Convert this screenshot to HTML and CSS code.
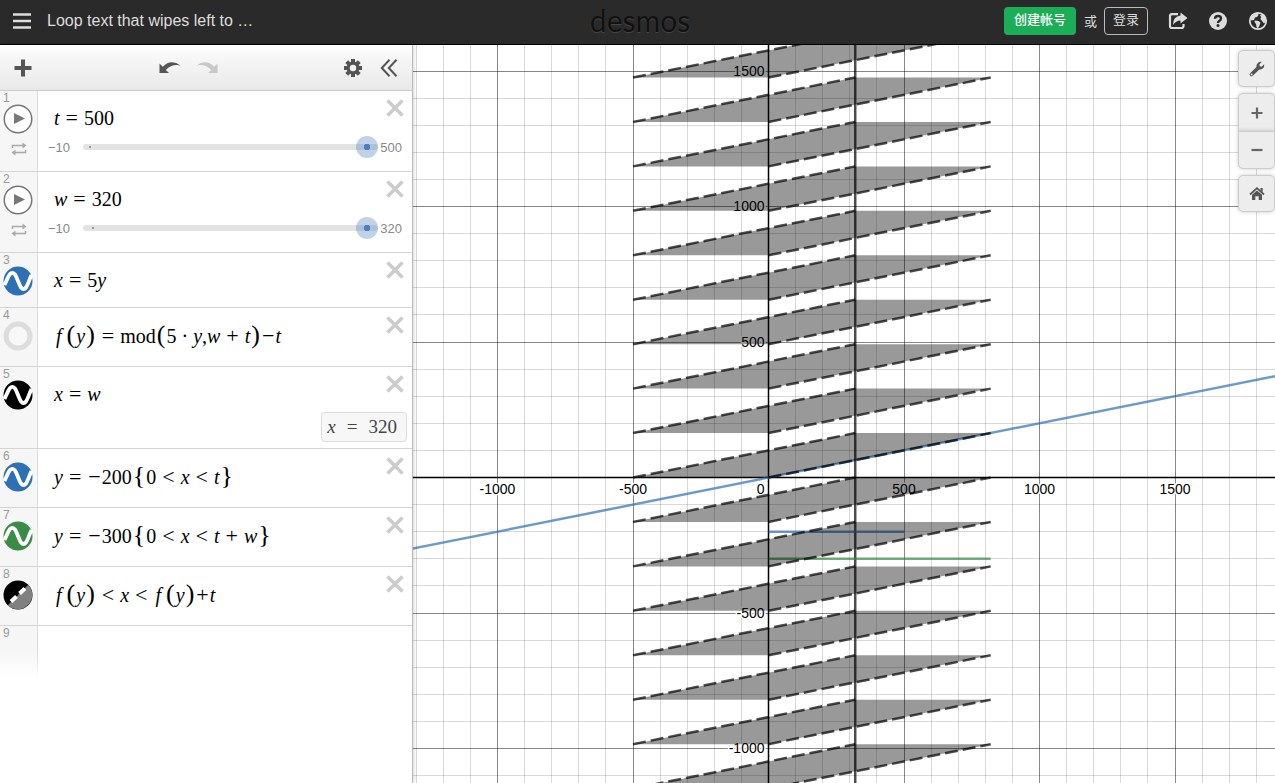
FILE: index.html
```html
<!DOCTYPE html>
<html lang="zh-CN">
<head>
<meta charset="utf-8">
<title>Loop text that wipes left to right</title>
<link rel="stylesheet" href="styles.css">
</head>
<body>
<svg class="sprite" aria-hidden="true">
  <symbol id="wave" viewBox="0 0 30 30">
    <circle cx="15" cy="15" r="14.5" fill="currentColor"/>
    <path d="M1.500 19C3.500 15 5 10.500 7 8Q9.500 5.500 12 8.500C14 11.500 16 18.500 18 21.500Q20.500 24.500 23 21.500C25 18.500 26.500 13 28.500 9" fill="none" stroke="#fff" stroke-width="3.800"/>
  </symbol>
  <symbol id="shade" viewBox="0 0 30 30">
    <circle cx="15" cy="15" r="14.500" fill="#000"/>
    <path d="M25.250 4.750A14.500 14.500 0 0 1 4.750 25.250Z" fill="#808080"/>
    <path d="M8 21.500L13.500 16.500M16.500 13.500L22 8.500" fill="none" stroke="#fff" stroke-width="4"/>
  </symbol>
  <symbol id="play" viewBox="0 0 30 30">
    <circle cx="15" cy="15" r="13.750" fill="#fff" stroke="#777" stroke-width="1.500"/>
    <path d="M11 9L22 14.500L11 20Z" fill="#777"/>
  </symbol>
  <symbol id="loop" viewBox="0 0 16 14">
    <path d="M1.500 6V3.500H13M14.500 8V10.500H3" fill="none" stroke="#aaa" stroke-width="1.500"/>
    <path d="M11.500 0.500L15.500 3.500L11.500 6.500ZM4.500 7.500L0.500 10.500L4.500 13.500Z" fill="#aaa"/>
  </symbol>
  <symbol id="cross" viewBox="0 0 18 18">
    <path d="M1.500 1.500L16.500 16.500M16.500 1.500L1.500 16.500" fill="none" stroke="#ccc" stroke-width="3.500"/>
  </symbol>
</svg>

<header class="topbar">
  <div class="topbar-left">
    <button class="icon-btn" aria-label="菜单">
      <svg width="20" height="18" viewBox="0 0 20 18"><path d="M1 2.500H19M1 9H19M1 15.500H19" stroke="#ddd" stroke-width="2.500"/></svg>
    </button>
    <h1 class="title">Loop text that wipes left to …</h1>
  </div>
  <div class="logo">desmos</div>
  <div class="topbar-right">
    <button class="signup">创建帐号</button>
    <span class="or">或</span>
    <button class="login">登录</button>
    <nav class="links">
      <button class="icon-btn" aria-label="分享">
        <svg width="20" height="18" viewBox="0 0 20 18"><path d="M10 2.200H4Q2 2.200 2 4.200V14Q2 16 4 16H13.500Q15.500 16 15.500 14V12" fill="none" stroke="#ddd" stroke-width="2.200"/><path d="M12.500 0.500L19.500 6L12.500 11.500V8.500Q8 8.500 5 13Q5 4.500 12.500 3.600Z" fill="#ddd"/></svg>
      </button>
      <button class="icon-btn" aria-label="帮助">
        <svg width="20" height="20" viewBox="0 0 20 20"><circle cx="10" cy="10" r="9" fill="#ddd"/><path d="M7 7.800Q7 5 10 5Q13 5 13 7.500Q13 9 11.200 10Q10 10.700 10 12" fill="none" stroke="#2a2a2a" stroke-width="2.400"/><circle cx="10" cy="14.600" r="1.500" fill="#2a2a2a"/></svg>
      </button>
      <button class="icon-btn" aria-label="语言">
        <svg width="20" height="20" viewBox="0 0 20 20"><circle cx="10" cy="10" r="8.200" fill="none" stroke="#ddd" stroke-width="1.800"/><path d="M2 7L4 3.500L7 2L10 1.500L10.500 4L9 6L7 6.500L6 9L3.500 9.500ZM7 9.500L10.500 10L12.500 11.500L11.500 14.500L10 17.500L8.500 16L8 13L6.500 11ZM12 4L15 3.500L17.500 6.500L18 10L16 12.500L14 10L12.500 8L13 6Z" fill="#ddd"/></svg>
      </button>
    </nav>
  </div>
</header>

<main class="workspace">
  <section class="panel">
    <div class="toolbar">
      <button class="icon-btn" aria-label="添加"><svg width="18" height="18" viewBox="0 0 18 18"><path d="M9 0.500V17.500M0.500 9H17.500" stroke="#555" stroke-width="4"/></svg></button>
      <div class="history">
        <button class="icon-btn" aria-label="撤消"><svg width="22" height="13" viewBox="0 0 22 13"><path d="M0.500 2.500V12H10L6.800 9Q13 2.500 21.500 4.500Q12-2.500 3.800 5.700Z" fill="#555"/></svg></button>
        <button class="icon-btn" aria-label="重做"><svg width="22" height="13" viewBox="0 0 22 13"><path d="M21.500 2.500V12H12L15.200 9Q9 2.500 0.500 4.500Q10-2.500 18.200 5.700Z" fill="#c8c8c8"/></svg></button>
      </div>
      <div class="tools">
        <button class="icon-btn" aria-label="编辑列表"><svg width="18" height="18" viewBox="0 0 18 18"><g stroke="#555" stroke-width="4"><path d="M9 0V18M0 9H18M2.700 2.700L15.300 15.300M15.300 2.700L2.700 15.300"/></g><circle cx="9" cy="9" r="6.500" fill="#555"/><circle cx="9" cy="9" r="3.200" fill="#f3f3f3"/></svg></button>
        <button class="icon-btn" aria-label="隐藏列表"><svg width="18" height="18" viewBox="0 0 18 18"><path d="M9.500 0.800L1.800 9L9.500 17.200M16.500 0.800L8.800 9L16.500 17.200" fill="none" stroke="#555" stroke-width="2"/></svg></button>
      </div>
    </div>

    <ol class="list">
      <li class="row row-slider">
        <div class="gutter"><span class="num">1</span>
          <button class="icon-btn" aria-label="播放 t"><svg class="badge"><use href="#play"/></svg></button>
          <button class="icon-btn loop" aria-label="循环 t"><svg width="16" height="14"><use href="#loop"/></svg></button></div>
        <div class="body">
          <div class="math"><i>t</i><b class="eq">=</b>500</div>
          <label class="slider"><span>−10</span><input type="range" class="range" min="-10" max="500" value="500" aria-label="t"><span>500</span></label>
        </div>
        <button class="icon-btn close" aria-label="删除"><svg width="18" height="18"><use href="#cross"/></svg></button>
      </li>
      <li class="row row-slider">
        <div class="gutter"><span class="num">2</span>
          <button class="icon-btn" aria-label="播放 w"><svg class="badge"><use href="#play"/></svg></button>
          <button class="icon-btn loop" aria-label="循环 w"><svg width="16" height="14"><use href="#loop"/></svg></button></div>
        <div class="body">
          <div class="math"><i>w</i><b class="eq">=</b>320</div>
          <label class="slider"><span>−10</span><input type="range" class="range range-w" min="-10" max="320" value="320" aria-label="w"><span>320</span></label>
        </div>
        <button class="icon-btn close" aria-label="删除"><svg width="18" height="18"><use href="#cross"/></svg></button>
      </li>
      <li class="row row-short">
        <div class="gutter"><span class="num">3</span><button class="icon-btn blue" aria-label="隐藏"><svg class="badge"><use href="#wave"/></svg></button></div>
        <div class="body"><div class="math"><i>x</i><b class="eq">=</b>5<i>y</i></div></div>
        <button class="icon-btn close" aria-label="删除"><svg width="18" height="18"><use href="#cross"/></svg></button>
      </li>
      <li class="row row-tall">
        <div class="gutter"><span class="num">4</span><button class="icon-btn" aria-label="显示"><svg class="badge" viewBox="0 0 30 30"><circle cx="15" cy="15" r="12" fill="#f8f8f8" stroke="#ddd" stroke-width="5"/></svg></button></div>
        <div class="body"><div class="math"><i class="fn">f</i><b class="par">(</b><i>y</i><b class="par">)</b><b class="eq">=</b>mod<b class="par">(</b>5<b class="dot">·</b><i>y</i>,<i>w</i><b class="op">+</b><i>t</i><b class="par">)</b><b class="sign">−</b><i>t</i></div></div>
        <button class="icon-btn close" aria-label="删除"><svg width="18" height="18"><use href="#cross"/></svg></button>
      </li>
      <li class="row row-result">
        <div class="gutter"><span class="num">5</span><button class="icon-btn black" aria-label="隐藏"><svg class="badge"><use href="#wave"/></svg></button></div>
        <div class="body"><div class="math"><i>x</i><b class="eq">=</b><i>w</i></div><output class="result"><i>x</i><b class="sign">=</b>320</output></div>
        <button class="icon-btn close" aria-label="删除"><svg width="18" height="18"><use href="#cross"/></svg></button>
      </li>
      <li class="row row-tall">
        <div class="gutter"><span class="num">6</span><button class="icon-btn blue" aria-label="隐藏"><svg class="badge"><use href="#wave"/></svg></button></div>
        <div class="body"><div class="math"><i>y</i><b class="eq">=</b><b class="sign">−</b>200<b class="par">{</b>0<b class="op">&lt;</b><i>x</i><b class="op">&lt;</b><i>t</i><b class="par">}</b></div></div>
        <button class="icon-btn close" aria-label="删除"><svg width="18" height="18"><use href="#cross"/></svg></button>
      </li>
      <li class="row row-tall">
        <div class="gutter"><span class="num">7</span><button class="icon-btn green" aria-label="隐藏"><svg class="badge"><use href="#wave"/></svg></button></div>
        <div class="body"><div class="math"><i>y</i><b class="eq">=</b><b class="sign">−</b>300<b class="par">{</b>0<b class="op">&lt;</b><i>x</i><b class="op">&lt;</b><i>t</i><b class="op">+</b><i>w</i><b class="par">}</b></div></div>
        <button class="icon-btn close" aria-label="删除"><svg width="18" height="18"><use href="#cross"/></svg></button>
      </li>
      <li class="row row-tall">
        <div class="gutter"><span class="num">8</span><button class="icon-btn" aria-label="隐藏"><svg class="badge"><use href="#shade"/></svg></button></div>
        <div class="body"><div class="math"><i class="fn">f</i><b class="par">(</b><i>y</i><b class="par">)</b><b class="op">&lt;</b><i>x</i><b class="op">&lt;</b><i class="fn">f</i><b class="par">(</b><i>y</i><b class="par">)</b><b class="sign">+</b><i>t</i></div></div>
        <button class="icon-btn close" aria-label="删除"><svg width="18" height="18"><use href="#cross"/></svg></button>
      </li>
      <li class="row row-new"><div class="gutter"><span class="num">9</span></div></li>
    </ol>
  </section>

  <section class="graph">
    <svg id="plot" class="plot" role="img" aria-label="图形"></svg>
    <div class="controls">
      <button class="ctl" aria-label="设置"><svg width="18" height="18" viewBox="0 0 18 18"><path d="M3.500 14.500L10 8.200" stroke="#555" stroke-width="3.800" stroke-linecap="round"/><path d="M13.800 1.800L11.300 4.600L11.800 6.300L13.500 6.700L16.200 4.200Q16.800 7.200 14.500 8.800Q12.300 10.200 10 9L8.600 7.500Q7.800 4.800 9.800 3Q11.500 1.300 13.800 1.800Z" fill="#555"/><circle cx="3.600" cy="14.400" r="1" fill="#ededed"/></svg></button>
      <div class="zoom">
        <button class="ctl" aria-label="放大"><svg width="12" height="12" viewBox="0 0 12 12"><path d="M6 0.500V11.500M0.500 6H11.500" stroke="#666" stroke-width="2.200"/></svg></button>
        <button class="ctl" aria-label="缩小"><svg width="12" height="12" viewBox="0 0 12 12"><path d="M0.500 6H11.500" stroke="#666" stroke-width="2.200"/></svg></button>
      </div>
      <button class="ctl" aria-label="默认视口"><svg width="16" height="14" viewBox="0 0 16 14"><path d="M1 7.500L8 1.200L15 7.500" fill="none" stroke="#555" stroke-width="1.700"/><path d="M11.500 1H13.700V5L11.500 3ZM3 7.800L8 3.400L13 7.800V13H9.700V9.200H6.300V13H3Z" fill="#555"/></svg></button>
    </div>
  </section>
</main>
<script src="plot.js"></script>
</body>
</html>
```
FILE: styles.css
```css
* { box-sizing: border-box; }
body {
  margin: 0;
  height: 100vh;
  display: flex;
  flex-direction: column;
  overflow: hidden;
  background: #fff;
  font-family: "Liberation Sans", "Noto Sans CJK SC", sans-serif;
}
button { font: inherit; cursor: pointer; }
.sprite { display: none; }
.icon-btn {
  display: flex;
  align-items: center;
  justify-content: center;
  padding: 0;
  border: 0;
  background: none;
}

.topbar {
  flex: none;
  height: 45px;
  padding: 0 7px 2px 12px;
  display: grid;
  grid-template-columns: 1fr auto 1fr;
  align-items: center;
  background: #2a2a2a;
  border-bottom: 1px solid #000;
  color: #ddd;
}
.topbar-left { display: flex; align-items: center; gap: 15px; }
.title { margin: 0; font-size: 16px; font-weight: 400; line-height: 20px; }
.logo {
  font-family: Lato, sans-serif;
  font-size: 30px;
  line-height: 40px;
  padding-bottom: 2px;
  color: #111;
  text-shadow: 0 1px 1px #484848;
}
.topbar-right { display: flex; align-items: center; justify-content: flex-end; }
.signup, .login {
  height: 28px;
  padding: 0 0 2px;
  border-radius: 4px;
  font-size: 13px;
  line-height: 20px;
}
.signup { width: 72px; border: 0; background: #1cad57; color: #fff; font-weight: 500; }
.or { padding: 0 7px 2px 8px; font-size: 13px; }
.login { width: 44px; border: 1px solid #bbb; background: none; color: #ddd; }
.links { display: flex; gap: 20px; padding-left: 20px; }

.workspace { flex: 1; min-height: 0; display: flex; }
.panel {
  flex: none;
  width: 413px;
  border-right: 1px solid #bbb;
  box-shadow: 0 0 4px rgba(0, 0, 0, 0.25);
  position: relative;
  z-index: 1;
  background: #fff;
}
.toolbar {
  height: 46px;
  padding: 0 14px;
  display: grid;
  grid-template-columns: 1fr auto 1fr;
  align-items: center;
  background: linear-gradient(#fdfdfd, #e8e8e8);
  border-bottom: 1px solid #ccc;
}
.toolbar > .icon-btn { justify-self: start; }
.history { display: flex; gap: 15px; padding-right: 36px; }
.tools { display: flex; justify-content: flex-end; gap: 18px; }

.list { margin: 0; padding: 0; list-style: none; }
.row { display: flex; border-bottom: 1px solid #d4d4d4; position: relative; }
.row-slider { height: 81px; }
.row-short { height: 55px; }
.row-tall { height: 59px; }
.row-result { height: 82px; }
.row-new { height: 52px; border: 0; }
.gutter {
  flex: none;
  width: 38px;
  padding: 2px 2px 0 3px;
  background: #f6f6f6;
  border-right: 1px solid #ddd;
}
.row-new .gutter { background: linear-gradient(#f6f6f6 50%, #fff); border-image: linear-gradient(#ddd 50%, #fff) 1; border-style: solid; border-width: 0 1px 0 0; }
.num { display: block; font-size: 12px; line-height: 11px; color: #999; }
.badge { width: 30px; height: 30px; }
.loop { padding: 8px 0 0 8px; }
.blue { color: #2d70b3; }
.green { color: #388c46; }
.black { color: #000; }
.body { flex: 1; display: flex; flex-direction: column; padding: 13px 5px 0 16px; }
.row-tall .body { padding-top: 13px; }
.close { position: absolute; right: 8px; top: 8px; }

.math, .result {
  display: flex;
  align-items: baseline;
  font-family: "Liberation Serif", serif;
  font-size: 20px;
  line-height: 28px;
  color: #000;
  white-space: pre;
}
.math b, .result b { font-weight: 400; }
.math .eq { margin: 0 6px; font-size: 22px; }
.math .op { margin: 0 6px; font-size: 22px; }
.math .dot { margin: 0 5px; }
.math .sign { margin: 0 1px; font-size: 22px; }
.math .par { font-size: 26px; line-height: 28px; margin: 0 1px; }
.math .fn { margin-right: 4px; margin-left: 2px; }
.result {
  align-self: flex-end;
  margin-top: 4px;
  padding: 0 9px 0 5px;
  gap: 11px;
  border: 1px solid #ddd;
  border-radius: 4px;
  background: #f7f7f7;
  color: #444;
  font-size: 19px;
}
.slider {
  display: flex;
  align-items: center;
  margin: 4px 5px 0 -6px;
  height: 22px;
  font-size: 13px;
  color: #888;
}
.range {
  flex: 1;
  min-width: 0;
  margin: 0 2px 0 13px;
  height: 22px;
  appearance: none;
  background: none;
}
.range::-webkit-slider-runnable-track {
  height: 6px;
  border-radius: 3px;
  background: radial-gradient(circle at 7px 3px, #999 1px, transparent 1px) #e3e3e3;
}
.range-w::-webkit-slider-runnable-track {
  background: radial-gradient(circle at 10px 3px, #999 1px, transparent 1px) #e3e3e3;
}
.range::-webkit-slider-thumb {
  appearance: none;
  width: 22px;
  height: 22px;
  margin-top: -8px;
  border-radius: 50%;
  background: radial-gradient(circle, #4a7fc0 3px, rgba(76, 126, 191, 0.35) 3px);
}

.graph { flex: 1; min-width: 0; position: relative; overflow: hidden; }
.plot { display: block; width: 100%; height: 100%; }
.plot text { font-size: 14px; fill: #000; }
.halo { stroke: #fff; stroke-width: 3px; paint-order: stroke; stroke-linejoin: round; }
.minor { stroke: rgba(0, 0, 0, 0.15); }
.major { stroke: rgba(0, 0, 0, 0.47); }
.axis { stroke: #000; stroke-width: 1.5; }
.region { fill: rgba(0, 0, 0, 0.4); }
.curve { fill: none; stroke-width: 2.5; stroke-opacity: 0.7; }
.edge { stroke-dasharray: 13 5; }
.c-blue { stroke: #2d70b3; }
.c-green { stroke: #388c46; }
.c-black { stroke: #000; }
.controls {
  position: absolute;
  top: 5px;
  right: 0;
  display: flex;
  flex-direction: column;
  gap: 6px;
}
.ctl {
  display: flex;
  align-items: center;
  justify-content: center;
  width: 37px;
  height: 37px;
  padding: 0;
  border: 1px solid #ccc;
  border-radius: 5px;
  background: #ededed;
  box-shadow: 0 0 4px rgba(0, 0, 0, 0.2);
}
.zoom .ctl { height: 38px; }
.zoom .ctl:first-child { border-radius: 5px 5px 0 0; border-bottom: 0; }
.zoom .ctl:last-child { border-radius: 0 0 5px 5px; }
```
FILE: plot.js
```js
const svg = document.getElementById("plot");
const NS = "http://www.w3.org/2000/svg";
const SCALE = 0.271;
const T = 500;
const W = 320;

function add(tag, cls, attrs, text) {
  const el = document.createElementNS(NS, tag);
  el.setAttribute("class", cls);
  for (const key in attrs) el.setAttribute(key, attrs[key]);
  if (text !== undefined) el.textContent = text;
  svg.appendChild(el);
}

function draw() {
  svg.replaceChildren();
  const width = svg.clientWidth;
  const height = svg.clientHeight;
  const ox = Math.round(width * 0.412) + 0.5;
  const oy = Math.round(height * 0.5855) + 0.5;
  const px = x => ox + x * SCALE;
  const py = y => oy - y * SCALE;
  const snap = v => Math.floor(v) + 0.5;
  const line = (cls, x1, y1, x2, y2) => add("line", cls, { x1, y1, x2, y2 });
  const seg = (cls, x1, y1, x2, y2) => line("curve " + cls, px(x1), py(y1), px(x2), py(y2));

  for (const [cls, major] of [["minor", false], ["major", true]]) {
    for (let i = -40; i <= 40; i++) {
      if ((i % 5 === 0) !== major || i === 0) continue;
      const x = snap(px(i * 100));
      const y = snap(py(i * 100));
      if (x > 0 && x < width) line(cls, x, 0, x, height);
      if (y > 0 && y < height) line(cls, 0, y, width, y);
    }
  }
  line("axis", ox, 0, ox, height);
  line("axis", 0, oy, width, oy);

  for (let v = -3000; v <= 3000; v += 500) {
    const x = px(v);
    const y = py(v);
    if (v === 0) {
      add("text", "halo", { x: ox - 4, y: oy + 16, "text-anchor": "end" }, "0");
      continue;
    }
    if (x > 20 && x < width - 20) add("text", "halo", { x: x, y: oy + 16, "text-anchor": "middle" }, v);
    if (y > 10 && y < height - 10) add("text", "halo", { x: ox - 4, y: Math.floor(y) + 5, "text-anchor": "end" }, v);
  }

  const step = (T + W) / 5;
  seg("c-blue", -5000, -1000, 5000, 1000);
  seg("c-black", W, -4000, W, 4000);
  seg("c-blue", 0, -200, T, -200);
  seg("c-green", 0, -300, T + W, -300);
  for (let k = -20; k <= 20; k++) {
    const y0 = k * step;
    const y1 = y0 + step;
    if (py(y1) > height || py(y0) < 0) continue;
    const points = [[-T, y0], [0, y0], [T + W, y1], [W, y1]];
    add("polygon", "region", { points: points.map(p => px(p[0]) + "," + py(p[1])).join(" ") });
    seg("edge c-black", -T, y0, W, y1);
    seg("edge c-black", 0, y0, T + W, y1);
  }
}

draw();
window.addEventListener("resize", draw);
```
